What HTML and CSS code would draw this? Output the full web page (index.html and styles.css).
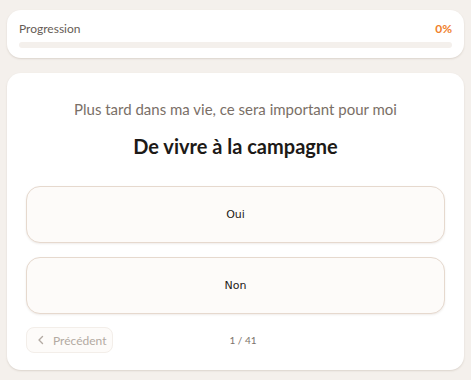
FILE: index.html
```html
<!DOCTYPE html>
<html lang="fr">

<head>
    <meta charset="UTF-8">
    <meta name="viewport" content="width=device-width, initial-scale=1.0">
    <title>Questionnaire</title>

    <link rel="stylesheet" href="styles.css">
</head>

<body>
    <div class="main">
        <div class="card progressCard">
            <div class="progressHead">
                <span class="progressLabel">Progression</span>
                <span class="progressValue">0%</span>
            </div>
            <div class="progressBar">
                <div class="progressFill" style="width: 0%"></div>
            </div>
        </div>

        <div class="card questionCard">
            <p class="subtitle">Plus tard dans ma vie, ce sera important pour moi</p>
            <h1>De vivre à la campagne</h1>

            <div class="answers">
                <button class="answer">Oui</button>
                <button class="answer">Non</button>
            </div>

            <div class="footer">
                <button class="prevBtn" disabled>
                    <svg width="10" height="10" viewBox="0 0 10 10"><path d="M6.5 1.5 3 5l3.5 3.5" fill="none" stroke="currentColor" stroke-width="1.4" stroke-linecap="round" stroke-linejoin="round"/></svg>
                    Précédent
                </button>
                <span class="counter">1 / 41</span>
                <span class="spacer"></span>
            </div>
        </div>
    </div>
</body>

</html>
```

FILE: styles.css
```css
* {
    box-sizing: border-box;
}

body {
    margin: 0;
    background-color: #f4f0ec;
    font-family: "Lato", "Open Sans", sans-serif;
    color: #1d1a17;
}

.main {
    padding: 10px 7px;
    display: flex;
    flex-direction: column;
    gap: 15px;
}

.card {
    background-color: #fff;
    border-radius: 14px;
    box-shadow: 0 1px 2px rgba(120, 100, 80, 0.2);
}

.progressCard {
    padding: 11px 12px 10px;
}

.progressHead {
    display: flex;
    justify-content: space-between;
    align-items: center;
    font-size: 12px;
    line-height: 16px;
    margin-bottom: 5px;
}

.progressLabel {
    color: #665c55;
}

.progressValue {
    color: #f07f2c;
    font-weight: 700;
}

.progressBar {
    height: 6px;
    border-radius: 3px;
    background-color: #f4f0ec;
    overflow: hidden;
}

.progressFill {
    height: 100%;
    background-color: #f07f2c;
}

.questionCard {
    padding: 25px 19px 17px;
}

.subtitle {
    margin: 0;
    text-align: center;
    font-size: 15px;
    line-height: 22px;
    color: #7a6f67;
}

h1 {
    margin: 12px 0 0;
    text-align: center;
    font-size: 20px;
    line-height: 28px;
    font-weight: 700;
}

.answers {
    margin-top: 26px;
    display: flex;
    flex-direction: column;
    gap: 14px;
}

.answer {
    height: 57px;
    border: 1.5px solid #e6d9ce;
    border-radius: 14px;
    background-color: #fdfbf9;
    box-shadow: 0 1px 2px rgba(120, 100, 80, 0.12);
    font-family: "DejaVu Sans", sans-serif;
    font-size: 11px;
    color: #1d1a17;
    cursor: pointer;
}

.footer {
    margin-top: 13px;
    display: flex;
    align-items: center;
    justify-content: space-between;
}

.prevBtn {
    display: flex;
    align-items: center;
    gap: 7px;
    width: 87px;
    height: 26px;
    padding: 0 0 0 9px;
    border: 1px solid #f3eee9;
    border-radius: 8px;
    background-color: #fdfbf9;
    font-family: "Lato", "Open Sans", sans-serif;
    font-size: 12px;
    color: #b3aaa2;
}

.counter {
    font-size: 10px;
    color: #7d736c;
}

.spacer {
    width: 72px;
}
```
